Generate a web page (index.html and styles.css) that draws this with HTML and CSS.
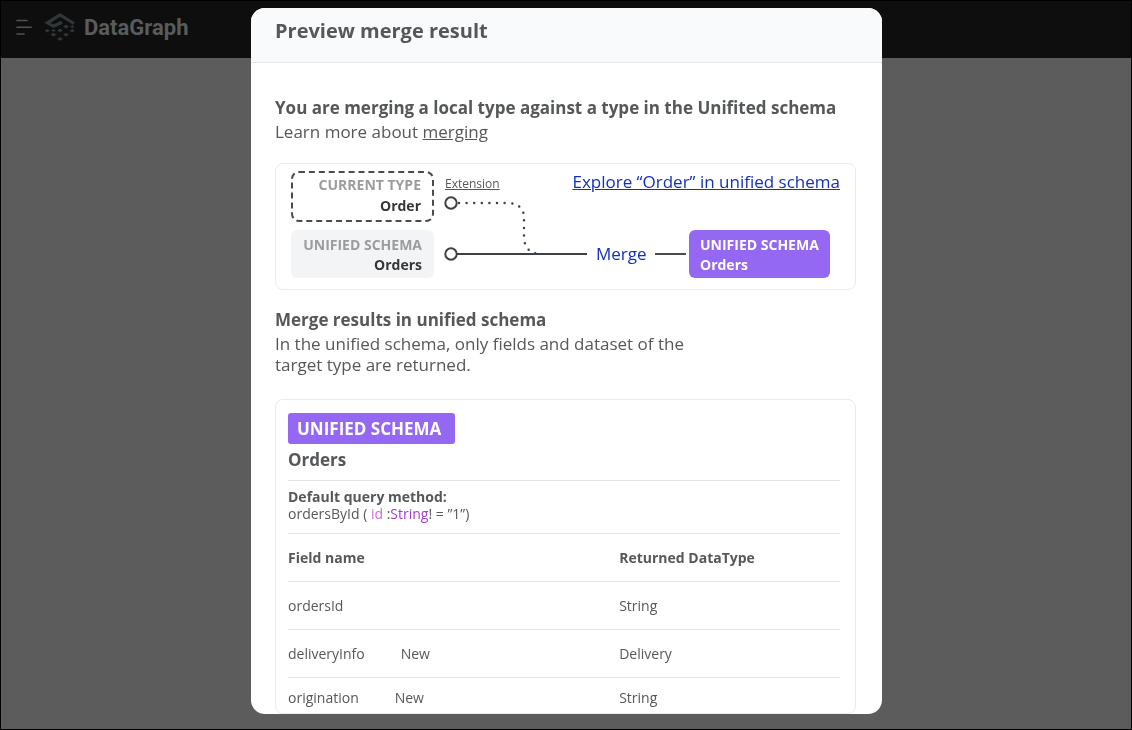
FILE: index.html
```html
<!DOCTYPE html>
<html lang="en">
<head>
<meta charset="utf-8">
<title>DataGraph</title>
<link rel="stylesheet" href="styles.css">
</head>
<body>
<header class="topbar">
  <button class="menu-button" type="button" aria-label="Menu">
    <svg width="17" height="17" viewBox="0 0 17 17" fill="none" stroke="#4f5355" stroke-width="1.6" stroke-linecap="round"><path d="M2 1.500H12M2 8.200H16.200M2 15H9"/></svg>
  </button>
  <svg class="logo" width="32" height="30" viewBox="0 0 32 30" aria-hidden="true">
    <path d="M30 11.500L16 3L3.500 10.800L9.500 14.300L18 10.300" fill="none" stroke="#30373b" stroke-width="3.200"/>
    <g fill="#30373b">
      <path d="M22 12.700l3 1.900-3 1.900-3-1.900zM28.300 13.200l2.200 1.400-2.200 1.400-2.200-1.400z"/>
      <path d="M3.300 17l2.500 1.800-2.500 1.800-2.500-1.800zM9.500 17l2.200 1.400-2.200 1.400-2.200-1.400zM16 16.500l3 1.900-3 1.900-3-1.900zM28.300 17l2.500 1.800-2.500 1.800-2.500-1.800z"/>
      <path d="M9.500 20.800l3 1.900-3 1.900-3-1.900zM22 20.800l3 1.900-3 1.900-3-1.900zM16 25l3 1.900-3 1.900-3-1.900z"/>
    </g>
  </svg>
  <span class="brand">DataGraph</span>
</header>

<div class="overlay">
  <section class="modal" role="dialog" aria-labelledby="modal-title">
    <header class="modal-header">
      <h1 class="modal-title" id="modal-title">Preview merge result</h1>
    </header>
    <div class="modal-body">
      <h2 class="heading">You are merging a local type against a type in the Unifited schema</h2>
      <p class="text">Learn more about <a class="quiet-link" href="#">merging</a></p>

      <div class="card diagram">
        <div class="type-box current">
          <span class="type-label">CURRENT TYPE</span>
          <span>Order</span>
        </div>
        <div class="type-box local">
          <span class="type-label">UNIFIED SCHEMA</span>
          <span>Orders</span>
        </div>
        <svg class="connector" width="153" height="107" viewBox="0 0 153 107" fill="none" stroke="#3c4145" aria-hidden="true">
          <circle cx="17" cy="32" r="5.700" stroke-width="2"/>
          <circle cx="17" cy="83" r="5.700" stroke-width="2"/>
          <path d="M23 83H153" stroke-width="2"/>
          <path d="M25 32H72Q90 32 90 47V65Q90 83 108 83" stroke-width="2.500" stroke-linecap="round" stroke-dasharray="0 7.600"/>
        </svg>
        <a class="quiet-link extension" href="#">Extension</a>
        <a class="link explore" href="#">Explore “Order” in unified schema</a>
        <div class="merge">
          <a class="link merge-link" href="#">Merge</a>
          <span class="merge-line"></span>
        </div>
        <div class="type-box target">
          <span>UNIFIED SCHEMA</span>
          <span>Orders</span>
        </div>
      </div>

      <h2 class="heading">Merge results in unified schema</h2>
      <p class="text summary">In the unified schema, only fields and dataset of the target type are returned.</p>

      <div class="card schema">
        <span class="badge">UNIFIED SCHEMA</span>
        <h3 class="schema-name">Orders</h3>
        <div class="query">
          <strong>Default query method:</strong>
          <span>ordersById ( <span class="arg">id</span> :<span class="arg-type">String</span>! = ”1”)</span>
        </div>
        <table class="fields">
          <thead>
            <tr><th>Field name</th><th>Returned DataType</th></tr>
          </thead>
          <tbody>
            <tr><td>ordersId</td><td>String</td></tr>
            <tr><td>deliveryInfo<span class="tag">New</span></td><td>Delivery</td></tr>
            <tr class="last"><td>origination<span class="tag">New</span></td><td>String</td></tr>
          </tbody>
        </table>
      </div>
    </div>
  </section>
</div>
</body>
</html>
```
FILE: styles.css
```css
* {
  box-sizing: border-box;
}

body {
  margin: 0;
  min-height: 100vh;
  border: 1px solid #000;
  background: #5c5c5c;
  color: #55585a;
  font-family: "Open Sans", sans-serif;
  font-size: 14px;
}

h1, h2, h3, p {
  margin: 0;
}

.topbar {
  display: flex;
  align-items: center;
  height: 57px;
  padding: 0 14px 5px;
  background: #0e0e0e;
}

.menu-button {
  display: flex;
  padding: 0;
  border: 0;
  background: none;
}

.logo {
  margin: 0 8px 0 12px;
}

.brand {
  color: #595b5c;
  font-family: Roboto, sans-serif;
  font-size: 22px;
  font-weight: 700;
}

.overlay {
  position: fixed;
  inset: 0;
  display: flex;
  justify-content: center;
  align-items: flex-start;
  padding: 8px 0 0 1px;
}

.modal {
  width: 100%;
  max-width: 631px;
  overflow: hidden;
  border-radius: 14px;
  background: #fff;
}

.modal-header {
  padding: 11px 24px 19px;
  border-bottom: 1px solid #e6e8ea;
  background: #f9fafc;
}

.modal-title {
  font-size: 20px;
  line-height: 24px;
}

.modal-body {
  padding: 32px 26px 0 24px;
}

.heading {
  font-size: 17px;
  line-height: 26px;
}

.text {
  font-size: 17px;
  line-height: 21px;
}

.summary {
  max-width: 440px;
}

.quiet-link {
  color: inherit;
}

.link {
  color: #1230bd;
  font-size: 17px;
  line-height: 22px;
}

.card {
  border: 1px solid #ebebec;
  border-radius: 8px;
}

.diagram {
  display: grid;
  grid-template-columns: 143px 153px 1fr 151px;
  grid-template-rows: 51px 48px;
  row-gap: 8px;
  margin: 21px 0 17px;
  padding: 7px 15px 11px;
}

.type-box {
  display: flex;
  flex-direction: column;
  justify-content: center;
  padding-top: 2px;
  border-radius: 6px;
  font-size: 14px;
  font-weight: 700;
  line-height: 20px;
}

.current,
.local {
  padding-right: 12px;
  color: #33373a;
  text-align: right;
}

.current {
  padding: 0 11px 4px 0;
  border: 2px dashed #484c4f;
  border-radius: 8px;
  line-height: 21px;
}

.local {
  grid-row: 2;
  background: #f3f4f6;
}

.type-label {
  color: #9b9c9d;
}

.connector {
  grid-area: 1 / 2 / 3 / 3;
}

.extension {
  grid-area: 1 / 2;
  padding: 5px 0 0 11px;
  font-size: 12px;
  line-height: 16px;
}

.explore {
  grid-area: 1 / 3;
  grid-column-end: 5;
  justify-self: end;
  white-space: nowrap;
}

.merge {
  grid-area: 2 / 3;
  display: flex;
  align-items: center;
  gap: 8px;
  padding: 0 3px 0 9px;
}

.merge-link {
  text-decoration: none;
}

.merge-line {
  flex: 1;
  height: 2px;
  background: #484c4f;
}

.target {
  grid-area: 2 / 4;
  margin-right: 10px;
  padding-left: 11px;
  background: #9468f2;
  color: #fff;
}

.schema {
  margin-top: 24px;
  padding: 13px 15px 0 12px;
}

.badge {
  display: inline-block;
  padding: 0 14px 0 9px;
  border-radius: 3px;
  background: #9468f2;
  color: #fff;
  font-size: 17px;
  font-weight: 700;
  line-height: 31px;
}

.schema-name {
  padding: 4px 0 8px;
  border-bottom: 1px solid #e6e6e7;
  font-size: 17px;
  line-height: 24px;
}

.query {
  display: flex;
  flex-direction: column;
  padding: 7px 0 11px;
  line-height: 17px;
}

.arg {
  color: #cf6bd0;
}

.arg-type {
  color: #a43cd6;
}

.fields {
  width: 100%;
  border-collapse: collapse;
  table-layout: fixed;
}

.fields th,
.fields td {
  height: 48px;
  padding: 0;
  border-top: 1px solid #e6e6e7;
  text-align: left;
}

.fields th:first-child {
  width: 60%;
}

.fields .last td {
  height: 35px;
  padding-top: 4px;
}

.tag {
  margin-left: 36px;
}
```
